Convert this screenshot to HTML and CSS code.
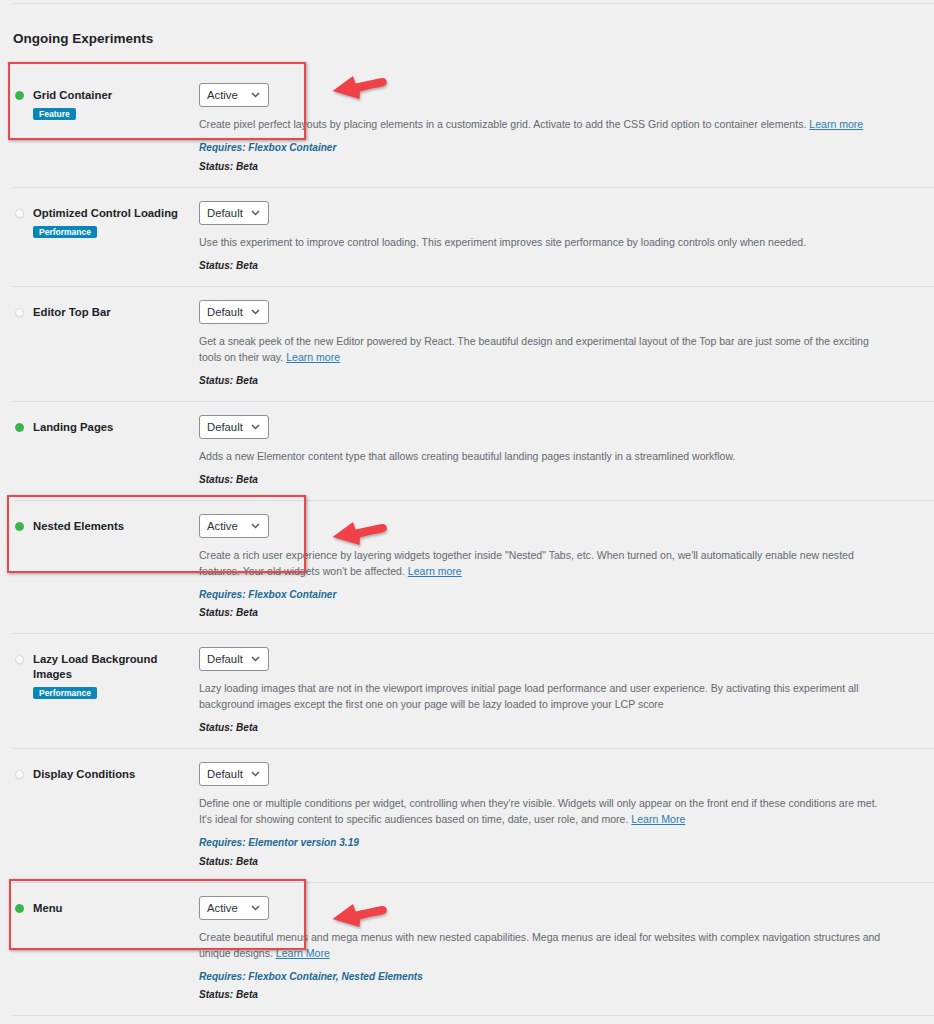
FILE: index.html
```html
<!DOCTYPE html>
<html lang="en">
<head>
<meta charset="utf-8">
<title>Ongoing Experiments</title>
<link rel="stylesheet" href="styles.css">
</head>
<body>
<div class="page">
  <div class="prev-sep"></div>
  <h2 class="section-title">Ongoing Experiments</h2>

  <div class="experiments">

    <div class="exp">
      <div class="exp-label">
        <span class="dot dot-on"></span>
        <div class="label-text">
          <div class="exp-name">Grid Container</div>
          <span class="tag">Feature</span>
        </div>
      </div>
      <div class="exp-body">
        <div class="select"><span>Active</span><svg class="chev" width="9" height="6" viewBox="0 0 9 6"><path d="M1 1l3.5 3.5L8 1" fill="none" stroke="#50575e" stroke-width="1.5"/></svg></div>
        <p class="desc">Create pixel perfect layouts by placing elements in a customizable grid. Activate to add the CSS Grid option to container elements. <a href="#">Learn more</a></p>
        <div class="meta">
          <div class="requires">Requires: Flexbox Container</div>
          <div class="status">Status: Beta</div>
        </div>
      </div>
      <div class="mark mark-1"></div>
      <svg class="arrow arrow-1" width="58" height="28" viewBox="0 0 58 28"><path d="M1.5 17L22 2l2.5 7.5C34 7.5 44 5 51 4c4-.5 6 4 4 6.5-2 2-5 2.5-8 3-7 1-13 2.5-18 4l-.5 7.5z"/></svg>
    </div>

    <div class="exp">
      <div class="exp-label">
        <span class="dot"></span>
        <div class="label-text">
          <div class="exp-name">Optimized Control Loading</div>
          <span class="tag">Performance</span>
        </div>
      </div>
      <div class="exp-body">
        <div class="select"><span>Default</span><svg class="chev" width="9" height="6" viewBox="0 0 9 6"><path d="M1 1l3.5 3.5L8 1" fill="none" stroke="#50575e" stroke-width="1.5"/></svg></div>
        <p class="desc">Use this experiment to improve control loading. This experiment improves site performance by loading controls only when needed.</p>
        <div class="meta">
          <div class="status">Status: Beta</div>
        </div>
      </div>
    </div>

    <div class="exp">
      <div class="exp-label">
        <span class="dot"></span>
        <div class="label-text">
          <div class="exp-name">Editor Top Bar</div>
        </div>
      </div>
      <div class="exp-body">
        <div class="select"><span>Default</span><svg class="chev" width="9" height="6" viewBox="0 0 9 6"><path d="M1 1l3.5 3.5L8 1" fill="none" stroke="#50575e" stroke-width="1.5"/></svg></div>
        <p class="desc">Get a sneak peek of the new Editor powered by React. The beautiful design and experimental layout of the Top bar are just some of the exciting<br>tools on their way. <a href="#">Learn more</a></p>
        <div class="meta">
          <div class="status">Status: Beta</div>
        </div>
      </div>
    </div>

    <div class="exp">
      <div class="exp-label">
        <span class="dot dot-on"></span>
        <div class="label-text">
          <div class="exp-name">Landing Pages</div>
        </div>
      </div>
      <div class="exp-body">
        <div class="select"><span>Default</span><svg class="chev" width="9" height="6" viewBox="0 0 9 6"><path d="M1 1l3.5 3.5L8 1" fill="none" stroke="#50575e" stroke-width="1.5"/></svg></div>
        <p class="desc">Adds a new Elementor content type that allows creating beautiful landing pages instantly in a streamlined workflow.</p>
        <div class="meta">
          <div class="status">Status: Beta</div>
        </div>
      </div>
    </div>

    <div class="exp">
      <div class="exp-label">
        <span class="dot dot-on"></span>
        <div class="label-text">
          <div class="exp-name">Nested Elements</div>
        </div>
      </div>
      <div class="exp-body">
        <div class="select"><span>Active</span><svg class="chev" width="9" height="6" viewBox="0 0 9 6"><path d="M1 1l3.5 3.5L8 1" fill="none" stroke="#50575e" stroke-width="1.5"/></svg></div>
        <p class="desc">Create a rich user experience by layering widgets together inside "Nested" Tabs, etc. When turned on, we'll automatically enable new nested<br>features. Your old widgets won't be affected. <a href="#">Learn more</a></p>
        <div class="meta">
          <div class="requires">Requires: Flexbox Container</div>
          <div class="status">Status: Beta</div>
        </div>
      </div>
      <div class="mark mark-2"></div>
      <svg class="arrow arrow-2" width="58" height="28" viewBox="0 0 58 28"><path d="M1.5 17L22 2l2.5 7.5C34 7.5 44 5 51 4c4-.5 6 4 4 6.5-2 2-5 2.5-8 3-7 1-13 2.5-18 4l-.5 7.5z"/></svg>
    </div>

    <div class="exp">
      <div class="exp-label">
        <span class="dot"></span>
        <div class="label-text">
          <div class="exp-name">Lazy Load Background Images</div>
          <span class="tag">Performance</span>
        </div>
      </div>
      <div class="exp-body">
        <div class="select"><span>Default</span><svg class="chev" width="9" height="6" viewBox="0 0 9 6"><path d="M1 1l3.5 3.5L8 1" fill="none" stroke="#50575e" stroke-width="1.5"/></svg></div>
        <p class="desc">Lazy loading images that are not in the viewport improves initial page load performance and user experience. By activating this experiment all<br>background images except the first one on your page will be lazy loaded to improve your LCP score</p>
        <div class="meta">
          <div class="status">Status: Beta</div>
        </div>
      </div>
    </div>

    <div class="exp">
      <div class="exp-label">
        <span class="dot"></span>
        <div class="label-text">
          <div class="exp-name">Display Conditions</div>
        </div>
      </div>
      <div class="exp-body">
        <div class="select"><span>Default</span><svg class="chev" width="9" height="6" viewBox="0 0 9 6"><path d="M1 1l3.5 3.5L8 1" fill="none" stroke="#50575e" stroke-width="1.5"/></svg></div>
        <p class="desc">Define one or multiple conditions per widget, controlling when they're visible. Widgets will only appear on the front end if these conditions are met.<br>It's ideal for showing content to specific audiences based on time, date, user role, and more. <a href="#">Learn More</a></p>
        <div class="meta">
          <div class="requires">Requires: Elementor version 3.19</div>
          <div class="status">Status: Beta</div>
        </div>
      </div>
    </div>

    <div class="exp">
      <div class="exp-label">
        <span class="dot dot-on"></span>
        <div class="label-text">
          <div class="exp-name">Menu</div>
        </div>
      </div>
      <div class="exp-body">
        <div class="select"><span>Active</span><svg class="chev" width="9" height="6" viewBox="0 0 9 6"><path d="M1 1l3.5 3.5L8 1" fill="none" stroke="#50575e" stroke-width="1.5"/></svg></div>
        <p class="desc">Create beautiful menus and mega menus with new nested capabilities. Mega menus are ideal for websites with complex navigation structures and<br>unique designs. <a href="#">Learn More</a></p>
        <div class="meta">
          <div class="requires">Requires: Flexbox Container, Nested Elements</div>
          <div class="status">Status: Beta</div>
        </div>
      </div>
      <div class="mark mark-3"></div>
      <svg class="arrow arrow-3" width="58" height="28" viewBox="0 0 58 28"><path d="M1.5 17L22 2l2.5 7.5C34 7.5 44 5 51 4c4-.5 6 4 4 6.5-2 2-5 2.5-8 3-7 1-13 2.5-18 4l-.5 7.5z"/></svg>
    </div>

  </div>
</div>
</body>
</html>
```

FILE: styles.css
```css
html, body {
  margin: 0;
  padding: 0;
  background: #f0f0f1;
}

body {
  font-family: "Liberation Sans", Arial, sans-serif;
  color: #1d2327;
  overflow: hidden;
}

.page {
  padding-left: 13px;
}

.prev-sep {
  height: 3px;
  border-bottom: 1px solid #dcdcde;
}

.section-title {
  margin: 26px 0 22px;
  font-size: 13.5px;
  line-height: 18px;
  font-weight: 700;
  color: #1d2327;
}

.exp {
  position: relative;
  display: grid;
  grid-template-columns: 186px 1fr;
  padding: 13px 0 11px;
  border-bottom: 1px solid #dcdcde;
}

.exp-label {
  display: flex;
  align-items: flex-start;
  gap: 9px;
  padding: 5px 0 0 2px;
}

.dot {
  flex: none;
  box-sizing: border-box;
  width: 9px;
  height: 9px;
  margin-top: 3px;
  border-radius: 50%;
  background: #fbfbfb;
  border: 1px solid #dadadd;
  box-shadow: 0 1px 1px rgba(0, 0, 0, 0.06);
}

.dot-on {
  background: #39b54a;
  border-color: #39b54a;
  box-shadow: none;
}

.label-text {
  width: 150px;
}

.exp-name {
  font-size: 11.3px;
  line-height: 15px;
  font-weight: 700;
  color: #1d2327;
}

.tag {
  display: inline-block;
  margin-top: 4px;
  padding: 0 6px;
  height: 12px;
  line-height: 12px;
  font-size: 8.5px;
  font-weight: 700;
  color: #fff;
  background: #0a86b8;
  border-radius: 2px;
}

.exp-body {
  min-width: 0;
}

.select {
  box-sizing: border-box;
  width: 70px;
  height: 24px;
  display: flex;
  align-items: center;
  justify-content: space-between;
  padding: 0 8px 0 7px;
  background: #fff;
  border: 1px solid #8c8f94;
  border-radius: 3px;
  font-size: 11.3px;
  color: #2c3338;
}

.chev {
  display: block;
}

.desc {
  margin: 9px 0 0;
  font-size: 10.55px;
  line-height: 16px;
  color: #646970;
  white-space: nowrap;
}

.desc a {
  color: #2a7db0;
  text-decoration: underline;
}

.meta {
  margin-top: 7px;
  font-size: 10.1px;
  font-weight: 700;
  font-style: italic;
}

.requires {
  line-height: 18.5px;
  color: #216a91;
}

.status {
  line-height: 18px;
  color: #1d2327;
}

.mark {
  position: absolute;
  border: 2px solid #e8474c;
  box-shadow: 1px 1px 3px rgba(0, 0, 0, 0.35), inset 0 0 1px rgba(0, 0, 0, 0.15);
  pointer-events: none;
}

.mark-1 {
  left: -5px;
  top: -8px;
  width: 294px;
  height: 74px;
}

.mark-2 {
  left: -6px;
  top: -6px;
  width: 295px;
  height: 74px;
}

.mark-3 {
  left: -4px;
  top: -4px;
  width: 293px;
  height: 67px;
}

.arrow {
  position: absolute;
  left: 318px;
  fill: #ef4146;
  filter: drop-shadow(1px 2px 1px rgba(0, 0, 0, 0.25));
}

.arrow-1 {
  top: 4px;
}

.arrow-2 {
  top: 19px;
}

.arrow-3 {
  top: 19px;
}
```
